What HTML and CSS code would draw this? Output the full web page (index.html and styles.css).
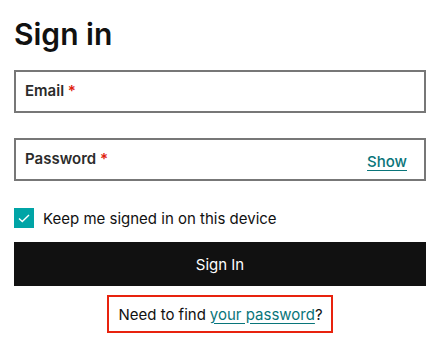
FILE: index.html
```html
<!DOCTYPE html>
<html lang="en">
<head>
<meta charset="utf-8">
<title>Sign in</title>
<link rel="stylesheet" href="styles.css">
</head>
<body>
<main class="signin">
  <h1 class="title">Sign in</h1>
  <div class="field">
    <span class="label">Email <span class="req">*</span></span>
  </div>
  <div class="field field-password">
    <span class="label">Password <span class="req">*</span></span>
    <a class="show" href="#">Show</a>
  </div>
  <label class="remember">
    <span class="check">
      <svg width="12" height="9" viewBox="0 0 12 9"><path d="M1 4.5 L4.3 7.6 L11 1" fill="none" stroke="#ffffff" stroke-width="1.4"/></svg>
    </span>
    <span class="remember-text">Keep me signed in on this device</span>
  </label>
  <button class="btn" type="button">Sign In</button>
  <div class="help-row">
    <p class="help">Need to find <a href="#">your password</a>?</p>
  </div>
</main>
</body>
</html>
```

FILE: styles.css
```css
* { box-sizing: border-box; }
html, body { margin: 0; padding: 0; background: #ffffff; }
body {
  font-family: Inter, "Noto Sans", "Liberation Sans", sans-serif;
  color: #111111;
}
.signin {
  padding: 0 10px 0 14px;
  display: flex;
  flex-direction: column;
}
.title {
  font-size: 30px;
  font-weight: 600;
  line-height: 38px;
  margin: 15px 0 17px 0;
  letter-spacing: 0;
}
.field {
  height: 43px;
  border: 2px solid #777777;
  display: flex;
  align-items: center;
  padding: 0 17px 2px 9px;
}
.field-password { margin-top: 25px; justify-content: space-between; }
.label {
  font-size: 15px;
  font-weight: 600;
  color: #2b2b2b;
}
.req { color: #e0200e; font-weight: 600; }
.show {
  color: #09757a;
  font-size: 15px;
  font-weight: 500;
  text-decoration: underline;
  text-underline-offset: 3px;
  align-self: flex-end;
  margin-bottom: 6px;
}
.remember {
  display: flex;
  align-items: center;
  gap: 9px;
  margin-top: 27px;
  height: 20px;
}
.check {
  width: 20px;
  height: 20px;
  background: #00a4a6;
  display: flex;
  align-items: center;
  justify-content: center;
}
.remember-text { font-size: 15px; color: #111111; }
.btn {
  margin-top: 14px;
  height: 44px;
  border: 0;
  background: #111111;
  color: #ffffff;
  font-family: inherit;
  font-size: 15px;
  font-weight: 400;
  width: 100%;
}
.help-row { display: flex; justify-content: center; margin-top: 9px; padding-right: 0; }
.help {
  margin: 0;
  border: 2px solid #e8230e;
  padding: 0 8px 0 9px;
  height: 38px;
  display: flex;
  align-items: center;
  font-size: 15px;
  color: #111111;
}
.help a {
  color: #09757a;
  text-decoration: underline;
  text-underline-offset: 3px;
  margin: 0 0 0 4px;
}
```
